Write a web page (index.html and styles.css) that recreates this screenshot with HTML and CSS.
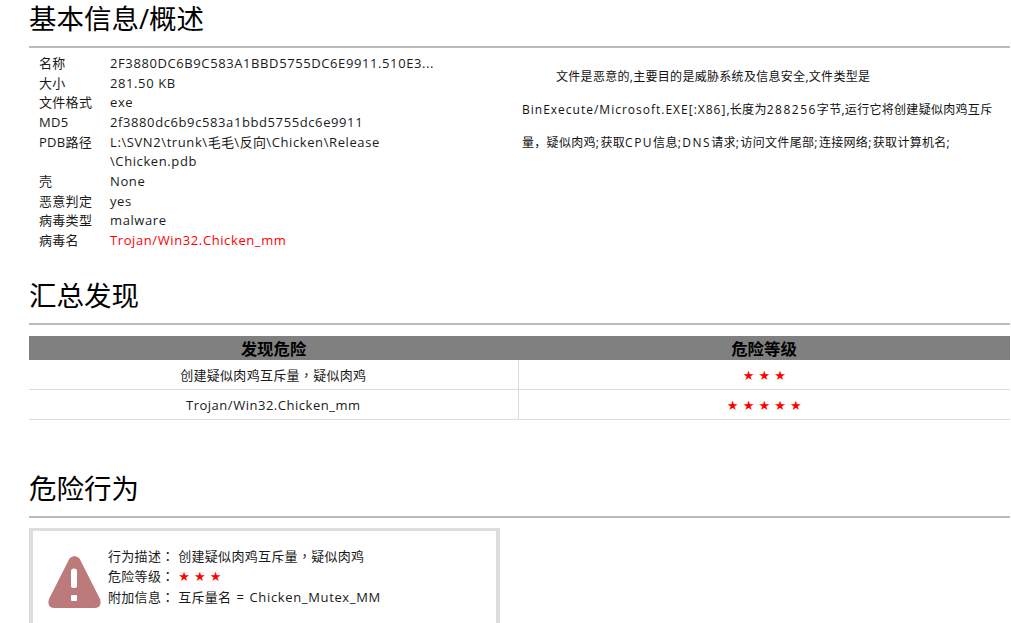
FILE: index.html
```html
<!DOCTYPE html>
<html lang="zh">
<head>
<meta charset="utf-8">
<title>基本信息/概述</title>
<link rel="stylesheet" href="styles.css">
</head>
<body>
<main class="page">
  <section class="section section-info">
    <h2 class="heading">基本信息/概述</h2>
    <div class="overview">
      <dl class="facts">
        <dt>名称</dt><dd>2F3880DC6B9C583A1BBD5755DC6E9911.510E3...</dd>
        <dt>大小</dt><dd>281.50 KB</dd>
        <dt>文件格式</dt><dd>exe</dd>
        <dt>MD5</dt><dd>2f3880dc6b9c583a1bbd5755dc6e9911</dd>
        <dt>PDB路径</dt><dd>L:\SVN2\trunk\<span class="cjk">毛毛</span>\<span class="cjk">反向</span>\Chicken\Release<br>\Chicken.pdb</dd>
        <dt>壳</dt><dd>None</dd>
        <dt>恶意判定</dt><dd>yes</dd>
        <dt>病毒类型</dt><dd>malware</dd>
        <dt>病毒名</dt><dd class="virus">Trojan/Win32.Chicken_mm</dd>
      </dl>
      <p class="summary">文件是恶意的,主要目的是威胁系统及信息安全,文件类型是<br><span class="lat">BinExecute/Microsoft.EXE[:X86]</span>,长度为<span class="wide">288256</span>字节,运行它将创建疑似肉鸡互斥<br>量，疑似肉鸡<span class="wide">;</span>获取<span class="wide">CPU</span>信息<span class="wide">;DNS</span>请求<span class="wide">;</span>访问文件尾部<span class="wide">;</span>连接网络<span class="wide">;</span>获取计算机名<span class="wide">;</span></p>
    </div>
  </section>

  <section class="section section-findings">
    <h2 class="heading">汇总发现</h2>
    <table class="findings">
      <thead>
        <tr><th>发现危险</th><th>危险等级</th></tr>
      </thead>
      <tbody>
        <tr><td>创建疑似肉鸡互斥量<span class="mid" lang="zh-TW">，</span>疑似肉鸡</td><td class="stars">★ ★ ★</td></tr>
        <tr><td class="latin-cell">Trojan/Win32.Chicken_mm</td><td class="stars">★ ★ ★ ★ ★</td></tr>
      </tbody>
    </table>
  </section>

  <section class="section">
    <h2 class="heading">危险行为</h2>
    <div class="behavior">
      <svg class="warn" viewBox="0 0 53 53" aria-hidden="true">
        <path fill="#bc7a7a" fill-rule="evenodd" d="M21.5 3.5Q26.5 -1.5 31.5 3.5L52 44Q54.5 53 46 53H7Q-1.500 53 1 44ZM23 16V31Q23 33 26 33Q29 33 29 31V16Q29 13.500 26 13.500Q23 13.500 23 16ZM24 40Q23 40 23 41V45Q23 46 24 46H28Q29 46 29 45V41Q29 40 28 40Z"/>
      </svg>
      <div class="behavior-text">
        <div>行为描述<span class="mid" lang="zh-TW">：</span> 创建疑似肉鸡互斥量<span class="mid" lang="zh-TW">，</span>疑似肉鸡</div>
        <div>危险等级<span class="mid" lang="zh-TW">：</span> <span class="stars">★ ★ ★</span></div>
        <div>附加信息<span class="mid" lang="zh-TW">：</span> 互斥量名 <span class="eq">=</span> <span class="wide-name">Chicken_Mutex_MM</span></div>
      </div>
    </div>
  </section>
</main>
</body>
</html>
```
FILE: styles.css
```css
html, body {
  margin: 0;
  padding: 0;
  height: 623px;
  overflow: hidden;
  background: #fff;
}
body {
  font-family: "Open Sans", "Noto Sans CJK SC", sans-serif;
  font-size: 13px;
  letter-spacing: 0.3px;
  color: #1a1a1a;
}
.page {
  padding-left: 29px;
  width: 981px;
}
.heading {
  margin: 0;
  height: 46px;
  border-bottom: 2px solid #bbb;
  font-family: "Open Sans", "Noto Sans CJK SC", sans-serif;
  font-size: 27.5px;
  font-weight: 400;
  letter-spacing: 0;
  line-height: 38px;
  color: #000;
}
.section-info {
  margin-bottom: 26.33px;
}
.section-findings {
  margin-bottom: 50px;
}
.overview {
  display: flex;
  padding-top: 6px;
}
.facts {
  display: grid;
  grid-template-columns: 71px 340px;
  grid-auto-rows: min-content;
  margin: 0;
  padding-left: 10px;
  line-height: 19.667px;
  width: 411px;
  flex: none;
}
.facts dt, .facts dd {
  margin: 0;
  white-space: nowrap;
}
.facts dd {
  letter-spacing: 0.6px;
}
.facts .cjk {
  letter-spacing: 0.3px;
}
.virus {
  color: #f00;
}
.summary {
  margin: 0 0 0 72px;
  padding-top: 6px;
  font-size: 12px;
  line-height: 33px;
  text-indent: 34px;
  white-space: nowrap;
  color: #111;
}
.lat {
  letter-spacing: 1px;
}
.wide {
  letter-spacing: 1.5px;
}
.mid {
  font-family: "Open Sans", "Noto Sans CJK TC", sans-serif;
}
.findings {
  width: 981px;
  margin-top: 11px;
  border-collapse: collapse;
  table-layout: fixed;
  text-align: center;
}
.findings th {
  height: 24px;
  padding: 0;
  background: #808080;
  color: #000;
  font-family: "Noto Sans CJK SC", sans-serif;
  font-size: 16.4px;
  letter-spacing: 0;
  line-height: 23px;
}
.findings th:first-child {
  width: 489px;
}
.findings td {
  height: 29px;
  padding: 0;
  border-bottom: 1px solid #ddd;
}
.findings td:first-child {
  border-right: 1px solid #ddd;
}
.findings .latin-cell {
  height: 28px;
  padding-top: 1px;
  letter-spacing: 0.52px;
}
.findings .stars {
  height: 27px;
  padding-top: 2px;
}
.stars {
  color: #f00;
  font-family: "DejaVu Sans", sans-serif;
  letter-spacing: 0;
}
.behavior {
  display: flex;
  align-items: flex-start;
  box-sizing: border-box;
  width: 471px;
  height: 120px;
  margin-top: 10px;
  padding: 15px 0 0 15px;
  border: 4px solid #ddd;
  border-top-width: 3px;
}
.warn {
  flex: none;
  width: 53px;
  height: 53px;
  margin-top: 9px;
}
.behavior-text {
  margin-left: 7px;
  line-height: 20px;
  white-space: nowrap;
}
.eq {
  margin: 0 1.5px;
}
.wide-name {
  letter-spacing: 0.65px;
}
```
